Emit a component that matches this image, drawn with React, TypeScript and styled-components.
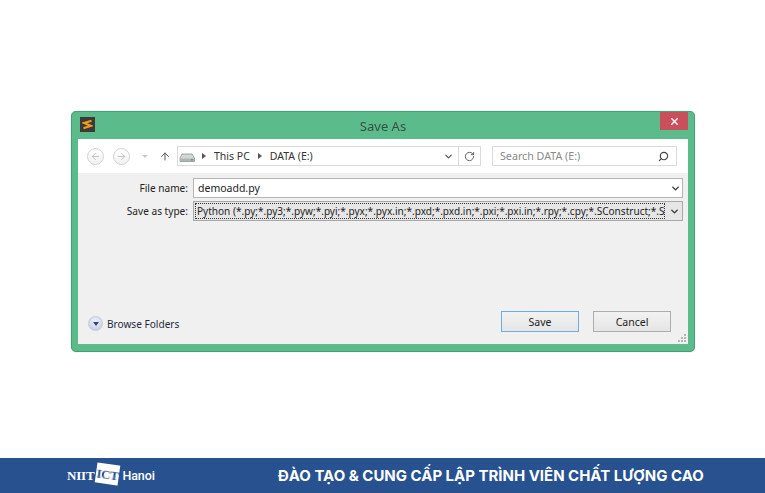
import React from "react";
import styled, { createGlobalStyle } from "styled-components";
import { X, ChevronDown, RotateCw, Search, ArrowUp, ArrowLeft, ArrowRight } from "lucide-react";

const Global = createGlobalStyle`
  html, body { margin: 0; padding: 0; background: #fff; }
  body { font-family: "Noto Sans", "Open Sans", sans-serif; }
`;

const Page = styled.div`
  width: 765px;
  height: 493px;
  display: flex;
  flex-direction: column;
  overflow: hidden;
  filter: blur(0.25px);
`;

const Stage = styled.div`
  flex: 1;
  padding: 111px 0 0 71px;
`;

const Dialog = styled.div`
  width: 624px;
  height: 241px;
  box-sizing: border-box;
  background: #5bbb8b;
  border: 1px solid #46a077;
  border-radius: 5px;
  padding: 0 6px 7px 6px;
  display: flex;
  flex-direction: column;
  box-shadow: 0 0 1px rgba(40, 100, 70, 0.5);
`;

const TitleBar = styled.div`
  height: 27px;
  flex: none;
  position: relative;
  display: flex;
  align-items: center;
  justify-content: center;
  color: #365045;
  font-size: 13px;
`;

const AppIcon = styled.div`
  position: absolute;
  left: 2px;
  top: 5px;
  width: 15px;
  height: 15px;
  background: #3a3a38;
  display: flex;
  align-items: center;
  justify-content: center;
`;

const CloseButton = styled.div`
  position: absolute;
  right: 0;
  top: 0;
  width: 28px;
  height: 18px;
  background: #c9505a;
  color: #fff;
  display: flex;
  align-items: center;
  justify-content: center;
`;

const Body = styled.div`
  flex: 1;
  background: #f0f0f0;
  display: flex;
  flex-direction: column;
  min-height: 0;
`;

const NavBar = styled.div`
  height: 34px;
  flex: none;
  background: #fff;
  display: flex;
  align-items: center;
  padding-left: 9px;
  box-sizing: border-box;
`;

const RoundNav = styled.div`
  width: 17px;
  height: 17px;
  box-sizing: border-box;
  border: 1px solid #d2d2d2;
  border-radius: 50%;
  color: #bdbdbd;
  display: flex;
  align-items: center;
  justify-content: center;
  margin-right: 9px;
  background: linear-gradient(#fff, #f1f1f1);
`;

const SmallCaret = styled.div`
  width: 0;
  height: 0;
  border-left: 3px solid transparent;
  border-right: 3px solid transparent;
  border-top: 3px solid #c9c9c9;
  margin: 0 11px 0 3px;
`;

const UpArrow = styled.div`
  width: 12px;
  color: #5a5a5a;
  display: flex;
  justify-content: center;
  margin-right: 6px;
`;

const Address = styled.div`
  width: 304px;
  height: 20px;
  box-sizing: border-box;
  border: 1px solid #dadada;
  background: #fff;
  display: flex;
  align-items: center;
  font-size: 10.5px;
  color: #333;
`;

const DriveIcon = styled.svg`
  margin: 1px 5px 0 1px;
  flex: none;
`;

const Crumb = styled.span`
  margin-right: 8px;
`;

const CrumbArrow = styled.span`
  width: 0;
  height: 0;
  border-top: 3px solid transparent;
  border-bottom: 3px solid transparent;
  border-left: 4px solid #555;
  margin: 0 8px 0 0;
`;

const AddressEnd = styled.div`
  margin-left: auto;
  display: flex;
  align-items: center;
  height: 100%;
  color: #555;
`;

const AddressCell = styled.div<{ $divider?: boolean }>`
  width: ${(p) => (p.$divider ? "22px" : "20px")};
  height: 100%;
  display: flex;
  align-items: center;
  justify-content: center;
  border-left: ${(p) => (p.$divider ? "1px solid #dadada" : "none")};
  box-sizing: border-box;
`;

const SearchBox = styled.div`
  width: 185px;
  height: 20px;
  margin-left: 11px;
  box-sizing: border-box;
  border: 1px solid #dadada;
  display: flex;
  align-items: center;
  justify-content: space-between;
  padding: 0 7px;
  font-size: 10.7px;
  color: #8a8a8a;
`;

const MirroredSearch = styled(Search)`
  transform: scaleX(-1);
`;

const Form = styled.div`
  padding: 5px 5px 0 0;
  display: flex;
  flex-direction: column;
  gap: 3px;
  flex: 1;
`;

const Row = styled.div`
  display: flex;
  align-items: center;
  height: 20px;
`;

const Label = styled.div`
  width: 115px;
  padding-right: 5px;
  box-sizing: border-box;
  text-align: right;
  font-size: 10.1px;
  color: #222;
  flex: none;
`;

const Field = styled.div<{ $select?: boolean }>`
  flex: 1;
  height: 20px;
  box-sizing: border-box;
  border: 1px solid ${(p) => (p.$select ? "#a8a8a8" : "#b4b4b4")};
  background: ${(p) => (p.$select ? "#e6e6e6" : "#fff")};
  display: flex;
  align-items: center;
  font-size: ${(p) => (p.$select ? "10.05px" : "10.5px")};
  color: #222;
  padding: ${(p) => (p.$select ? "1px" : "0 0 0 4px")};
  min-width: 0;
`;

const FieldText = styled.div`
  flex: 1;
`;

const FocusText = styled.div`
  flex: 1;
  min-width: 0;
  height: 100%;
  box-sizing: border-box;
  border: 1px dotted #333;
  white-space: nowrap;
  overflow: hidden;
  padding-left: 1px;
  line-height: 15px;
`;

const DropCell = styled.div`
  width: 16px;
  padding-left: 2px;
  box-sizing: border-box;
  flex: none;
  display: flex;
  justify-content: center;
  color: #333;
`;

const BottomBar = styled.div`
  height: 33px;
  flex: none;
  display: flex;
  align-items: flex-start;
  padding: 0 17px 0 10px;
  position: relative;
`;

const Browse = styled.div`
  display: flex;
  align-items: center;
  gap: 4px;
  font-size: 10.1px;
  color: #1f2a3c;
  margin-top: 5px;
`;

const BrowseIcon = styled.div`
  width: 15px;
  height: 15px;
  border-radius: 50%;
  background: radial-gradient(circle at 50% 35%, #f4f6fb, #b9c3da);
  border: 1px solid #c3cbdb;
  box-sizing: border-box;
  display: flex;
  align-items: center;
  justify-content: center;
  &::after {
    content: "";
    border-left: 3.5px solid transparent;
    border-right: 3.5px solid transparent;
    border-top: 4px solid #2f3f9a;
    margin-top: 1px;
  }
`;

const Buttons = styled.div`
  margin-left: auto;
  display: flex;
  gap: 14px;
`;

const Button = styled.div<{ $primary?: boolean }>`
  width: 78px;
  height: 21px;
  box-sizing: border-box;
  border: 1px solid ${(p) => (p.$primary ? "#6aaee6" : "#adadad")};
  background: linear-gradient(#f2f2f2, #e5e5e5);
  display: flex;
  align-items: center;
  justify-content: center;
  font-size: 10.5px;
  color: #222;
`;

const Grip = styled.svg`
  position: absolute;
  right: 1px;
  bottom: 1px;
`;

const Footer = styled.div`
  height: 35px;
  flex: none;
  background: #28528f;
  display: flex;
  align-items: center;
  color: #fff;
  padding-left: 67px;
`;

const Logo = styled.div`
  display: flex;
  align-items: center;
  width: 211px;
  flex: none;
`;

const LogoNiit = styled.span`
  font-family: "Liberation Serif", serif;
  font-weight: 700;
  font-size: 13px;
  letter-spacing: -0.2px;
  margin-right: 2px;
`;

const LogoIct = styled.span`
  width: 23px;
  height: 20px;
  flex: none;
  margin: -3px 3px 0 0;
  background: #fff;
  transform: rotate(8deg);
  color: #28528f;
  font-family: "Liberation Serif", serif;
  font-weight: 700;
  font-size: 13px;
  line-height: 22px;
  text-align: center;
  letter-spacing: -0.5px;
`;

const LogoPlace = styled.span`
  font-family: "Roboto", sans-serif;
  font-size: 12.5px;
  font-weight: 500;
  letter-spacing: -0.1px;
`;

const Slogan = styled.div`
  font-family: "Inter", "Open Sans", sans-serif;
  font-weight: 700;
  font-size: 14.97px;
  white-space: nowrap;
`;

export default function App() {
  return (
    <Page>
      <Global />
      <Stage>
        <Dialog>
          <TitleBar>
            <AppIcon>
              <svg width="11" height="11" viewBox="0 0 11 11">
                <path d="M9.5 1.8 L2 4 L9 6.8 L1.5 9.2" fill="none" stroke="#f79a1b" strokeWidth="2" />
              </svg>
            </AppIcon>
            Save As
            <CloseButton>
              <X size={11} strokeWidth={3} />
            </CloseButton>
          </TitleBar>
          <Body>
            <NavBar>
              <RoundNav>
                <ArrowLeft size={11} strokeWidth={2} />
              </RoundNav>
              <RoundNav>
                <ArrowRight size={11} strokeWidth={2} />
              </RoundNav>
              <SmallCaret />
              <UpArrow>
                <ArrowUp size={13} strokeWidth={2} />
              </UpArrow>
              <Address>
                <DriveIcon width="18" height="12" viewBox="0 0 18 12">
                  <path d="M3 3 H13 L15.5 7 V10.5 H1 V7 Z" fill="#d4d6d8" stroke="#8c9296" strokeWidth="0.8" />
                  <rect x="1.5" y="7.5" width="13.5" height="2.5" fill="#aeb3b6" />
                  <rect x="12" y="8" width="2" height="1.5" fill="#4fb24f" />
                </DriveIcon>
                <CrumbArrow />
                <Crumb>This PC</Crumb>
                <CrumbArrow />
                <Crumb>DATA (E:)</Crumb>
                <AddressEnd>
                  <AddressCell>
                    <ChevronDown size={11} strokeWidth={2.5} />
                  </AddressCell>
                  <AddressCell $divider>
                    <RotateCw size={11} strokeWidth={2} />
                  </AddressCell>
                </AddressEnd>
              </Address>
              <SearchBox>
                Search DATA (E:)
                <MirroredSearch size={11} strokeWidth={2.5} color="#444" />
              </SearchBox>
            </NavBar>
            <Form>
              <Row>
                <Label>File name:</Label>
                <Field>
                  <FieldText>demoadd.py</FieldText>
                  <DropCell>
                    <ChevronDown size={11} strokeWidth={3} />
                  </DropCell>
                </Field>
              </Row>
              <Row>
                <Label>Save as type:</Label>
                <Field $select>
                  <FocusText>Python (*.py;*.py3;*.pyw;*.pyi;*.pyx;*.pyx.in;*.pxd;*.pxd.in;*.pxi;*.pxi.in;*.rpy;*.cpy;*.SConstruct;*.Se</FocusText>
                  <DropCell>
                    <ChevronDown size={11} strokeWidth={3} />
                  </DropCell>
                </Field>
              </Row>
            </Form>
            <BottomBar>
              <Browse>
                <BrowseIcon />
                Browse Folders
              </Browse>
              <Buttons>
                <Button $primary>Save</Button>
                <Button>Cancel</Button>
              </Buttons>
              <Grip width="9" height="9" viewBox="0 0 9 9">
                <g fill="#b5b5b5">
                  <rect x="6" y="0" width="2" height="2" />
                  <rect x="3" y="3" width="2" height="2" />
                  <rect x="6" y="3" width="2" height="2" />
                  <rect x="0" y="6" width="2" height="2" />
                  <rect x="3" y="6" width="2" height="2" />
                  <rect x="6" y="6" width="2" height="2" />
                </g>
              </Grip>
            </BottomBar>
          </Body>
        </Dialog>
      </Stage>
      <Footer>
        <Logo>
          <LogoNiit>NIIT</LogoNiit>
          <LogoIct>ICT</LogoIct>
          <LogoPlace>Hanoi</LogoPlace>
        </Logo>
        <Slogan>ĐÀO TẠO &amp; CUNG CẤP LẬP TRÌNH VIÊN CHẤT LƯỢNG CAO</Slogan>
      </Footer>
    </Page>
  );
}
